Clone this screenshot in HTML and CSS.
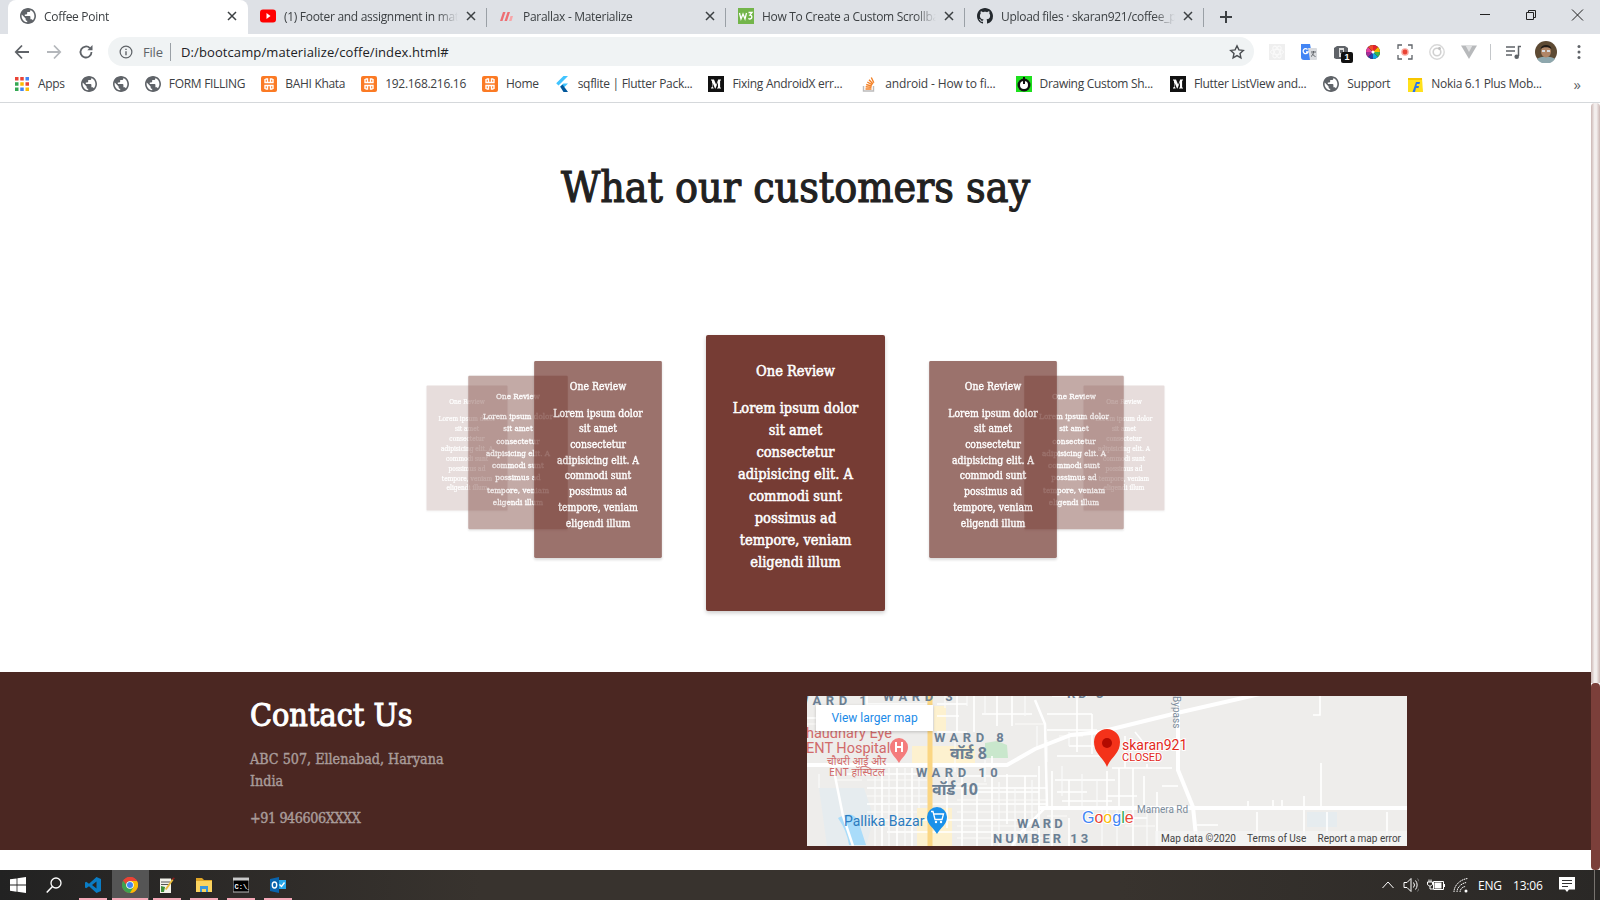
FILE: index.html
```html
<!DOCTYPE html>
<html>
<head>
    <meta charset="UTF-8">
    <meta name="viewport" content="width=device-width, initial-scale=1.0">
    <title>Coffee Point</title>
    <link rel="stylesheet" href="styles.css">
</head>
<body>
    <!-- shared icons -->
    <svg class="defs" width="0" height="0">
        <symbol id="i-globe" viewBox="2 2 20 20"><path fill="#5f6368" d="M12 2C6.48 2 2 6.48 2 12s4.48 10 10 10 10-4.48 10-10S17.52 2 12 2zm-1 17.93c-3.95-.49-7-3.85-7-7.93 0-.62.08-1.21.21-1.79L9 15v1c0 1.1.9 2 2 2v1.93zm6.9-2.54c-.26-.81-1-1.39-1.9-1.39h-1v-3c0-.55-.45-1-1-1H8v-2h2c.55 0 1-.45 1-1V7h2c1.1 0 2-.9 2-2v-.41c2.93 1.19 5 4.06 5 7.41 0 2.08-.8 3.97-2.1 5.39z"/></symbol>
        <symbol id="i-xampp" viewBox="0 0 16 16"><rect width="16" height="16" rx="2" fill="#fb7a24"/><path fill="none" stroke="#fff" stroke-width="1.400" d="M4.500 3h2v3.500h3V3h2M4.500 13h2V9.500h3V13h2M4 3v3.500h2M12 3v3.500h-2M4 13V9.500h2M12 13V9.500h-2"/></symbol>
        <symbol id="i-medium" viewBox="0 0 16 16"><rect width="16" height="16" fill="#111"/><path fill="#fff" d="M3 3.500h3l2.200 5.200 2-5.200H13v.6l-.9.8v6.300l.9.8v.5H9v-.5l1-.8V6L7.500 12.500H7L4.500 6.500v4.300l1.100 1.200v.5H3V12l1-1.200V5.200L3 4z"/></symbol>
        <symbol id="i-close" viewBox="0 0 10 10"><path fill="none" stroke="#3c4043" stroke-width="1.500" d="M1 1l8 8M9 1l-8 8"/></symbol>
    </svg>

    <!-- tab strip -->
    <div class="tabstrip">
        <div class="tab tab-active">
            <svg class="tab-icon"><use href="#i-globe"/></svg>
            <span class="tab-title">Coffee Point</span>
            <svg class="tab-close"><use href="#i-close"/></svg>
        </div>
        <div class="tab">
            <svg class="tab-icon" viewBox="0 0 16 16"><rect y="1.500" width="16" height="13" rx="3" fill="#f00"/><path fill="#fff" d="M6.500 5l4 3-4 3z"/></svg>
            <span class="tab-title">(1) Footer and assignment in materialize</span>
            <svg class="tab-close"><use href="#i-close"/></svg>
        </div>
        <div class="tab">
            <svg class="tab-icon" viewBox="0 0 16 16"><path fill="#ee6e73" d="M1 13L4 4h2.500l-3 9zM5.500 13l3-9H11l-3 9z"/><path fill="#f7a5a8" d="M10 13l1.500-5h2.500l-1.500 5z"/></svg>
            <span class="tab-title">Parallax - Materialize</span>
            <svg class="tab-close"><use href="#i-close"/></svg>
        </div>
        <div class="tab">
            <svg class="tab-icon" viewBox="0 0 16 16"><rect width="16" height="16" fill="#73b54a"/><path fill="none" stroke="#fff" stroke-width="1.300" d="M1.500 5l1.500 6 2-5 2 5 1.500-6M10.500 4.500h3.500l-2 2.500c2.500 0 2.500 4-.5 4l-1.200-.5"/></svg>
            <span class="tab-title">How To Create a Custom Scrollbar</span>
            <svg class="tab-close"><use href="#i-close"/></svg>
        </div>
        <div class="tab">
            <svg class="tab-icon" viewBox="0 0 16 16"><path fill="#24292e" d="M8 0C3.58 0 0 3.58 0 8c0 3.54 2.29 6.53 5.47 7.59.4.07.55-.17.55-.38 0-.19-.01-.82-.01-1.49-2.01.37-2.53-.49-2.69-.94-.09-.23-.48-.94-.82-1.13-.28-.15-.68-.52-.01-.53.63-.01 1.08.58 1.23.82.72 1.21 1.87.87 2.33.66.07-.52.28-.87.51-1.07-1.78-.2-3.64-.89-3.64-3.95 0-.87.31-1.59.82-2.15-.08-.2-.36-1.02.08-2.12 0 0 .67-.21 2.2.82.64-.18 1.32-.27 2-.27.68 0 1.36.09 2 .27 1.53-1.04 2.2-.82 2.2-.82.44 1.1.16 1.92.08 2.12.51.56.82 1.27.82 2.15 0 3.07-1.87 3.75-3.65 3.95.29.25.54.73.54 1.48 0 1.07-.01 1.930-.01 2.2 0 .21.15.46.55.38A8.013 8.013 0 0016 8c0-4.42-3.58-8-8-8z"/></svg>
            <span class="tab-title">Upload files · skaran921/coffee_point</span>
            <svg class="tab-close"><use href="#i-close"/></svg>
        </div>
        <svg class="new-tab" viewBox="0 0 12 12"><path fill="none" stroke="#3c4043" stroke-width="2" d="M6 0v12M0 6h12"/></svg>
        <div class="window-controls">
            <svg viewBox="0 0 46 30"><path fill="none" stroke="#222" d="M18 14.500h10"/></svg>
            <svg viewBox="0 0 46 30"><path fill="none" stroke="#222" d="M18.500 12.500h7v7h-7zM20.500 12.500v-2h7v7h-2"/></svg>
            <svg viewBox="0 0 46 30"><path fill="none" stroke="#222" d="M18 9.500l11 11M29 9.500l-11 11"/></svg>
        </div>
    </div>

    <!-- address bar -->
    <div class="toolbar">
        <svg class="nav-icon" viewBox="0 0 16 16"><path fill="none" stroke="#5f6368" stroke-width="1.800" d="M15 8H2M8 1.500L1.800 8 8 14.500"/></svg>
        <svg class="nav-icon" viewBox="0 0 16 16"><path fill="none" stroke="#b4b7bb" stroke-width="1.800" d="M1 8h13M8 1.500L14.200 8 8 14.500"/></svg>
        <svg class="nav-icon" viewBox="0 0 16 16"><path fill="none" stroke="#5f6368" stroke-width="1.800" d="M13.500 8a5.500 5.500 0 1 1-1.600-3.900"/><path fill="#5f6368" d="M14.500 1v5.200H9.300z"/></svg>
        <div class="omnibox">
            <svg class="info-icon" viewBox="0 0 16 16"><circle cx="8" cy="8" r="6.700" fill="none" stroke="#5f6368" stroke-width="1.400"/><path fill="#5f6368" d="M7.200 7h1.600v4.800H7.200zM7.200 4.200h1.600v1.600H7.200z"/></svg>
            <span class="scheme">File</span>
            <span class="url">D:/bootcamp/materialize/coffe/index.html#</span>
            <svg class="star-icon" viewBox="0 0 16 16"><path fill="none" stroke="#4a4d51" stroke-width="1.400" d="M8 1.800l1.900 4.100 4.400.5-3.300 3 .9 4.400L8 11.600l-3.900 2.200.9-4.400-3.300-3 4.400-.5z"/></svg>
        </div>
        <div class="extensions">
            <svg viewBox="0 0 16 16"><rect width="16" height="16" fill="#efefef"/><g fill="none" stroke="#fafafa" stroke-width="1"><ellipse cx="8" cy="8" rx="6.500" ry="2.600"/><ellipse cx="8" cy="8" rx="6.500" ry="2.600" transform="rotate(60 8 8)"/><ellipse cx="8" cy="8" rx="6.500" ry="2.600" transform="rotate(120 8 8)"/></g></svg>
            <svg viewBox="0 0 16 16"><path fill="#4285f4" d="M0 0h9l3 16H3a3 3 0 0 1-3-3z"/><path fill="#dadce0" d="M7 4h8a1 1 0 0 1 1 1v10a1 1 0 0 1-1 1H9z"/><path fill="none" stroke="#fff" stroke-width="1.300" d="M6.500 5.500a2.500 2.500 0 1 0 .5 2.500H5"/><path fill="none" stroke="#5f6368" d="M10 8h5M12.500 7v1c0 2-1 3.500-2.500 4.500M11 9.500c.7 1.300 1.800 2.400 3.500 3"/></svg>
            <div class="ext-badged">
                <svg viewBox="0 0 16 16"><path fill="#5f6368" d="M1 4l3-2h8l3 2v10l-2 1H3l-2-1z"/><path fill="#ddd" d="M6 4h5v9H6z"/><path fill="#5f6368" d="M7 6h3v3H7z"/></svg>
                <span class="ext-badge">1</span>
            </div>
            <svg viewBox="0 0 16 16"><circle cx="8" cy="8" r="7" fill="#111"/><path fill="#e8212a" d="M8 8V1a7 7 0 0 1 5 2z"/><path fill="#f7b500" d="M8 8l5-5a7 7 0 0 1 2 5z"/><path fill="#3db54a" d="M8 8h7a7 7 0 0 1-2 5z"/><path fill="#11a8e0" d="M8 8l5 5a7 7 0 0 1-5 2z"/><path fill="#2b3fa8" d="M8 8v7a7 7 0 0 1-5-2z"/><path fill="#a32c99" d="M8 8l-5 5a7 7 0 0 1-2-5z"/><path fill="#e73f9d" d="M8 8H1a7 7 0 0 1 2-5z"/><path fill="#ee4b2b" d="M8 8L3 3a7 7 0 0 1 5-2z"/><circle cx="8" cy="8" r="1.500" fill="#fff"/></svg>
            <svg viewBox="0 0 16 16"><path fill="none" stroke="#5f6368" stroke-width="1.300" d="M1 5V1h4M11 1h4v4M15 11v4h-4M5 15H1v-4"/><circle cx="8" cy="8" r="3.800" fill="#f8a9a1"/><circle cx="8" cy="8" r="2.400" fill="#ea4335"/></svg>
            <svg viewBox="0 0 16 16"><circle cx="8" cy="8" r="7.200" fill="none" stroke="#d8d8d8" stroke-width="1.400"/><circle cx="8" cy="8" r="3.800" fill="none" stroke="#d0d0d0" stroke-width="1.600"/><circle cx="10.500" cy="4.500" r="1.400" fill="#bdbdbd"/></svg>
            <svg viewBox="0 0 16 16"><path fill="#b7b9bb" d="M0 1.500h16L8 15z"/><path fill="#e1e2e3" d="M4.500 1.500h7L8 8z"/></svg>
            <span class="tool-divider"></span>
            <svg class="ext-media" viewBox="0 0 16 16"><path fill="none" stroke="#5f6368" stroke-width="1.500" d="M1 3h9M1 7h9M1 11h6M13.500 12V2.500H16"/><circle cx="11.700" cy="12.800" r="2.300" fill="#5f6368"/></svg>
            <svg class="avatar" viewBox="0 0 22 22"><circle cx="11" cy="11" r="11" fill="#5d4a33"/><path fill="#8ea7ad" d="M2 18c3-3.500 15-3.500 18 0a11 11 0 0 1-18 0z"/><ellipse cx="11" cy="10.500" rx="5" ry="6" fill="#b08566"/><path fill="#1f1a16" d="M5.500 8C6 2.500 16 2.500 16.500 8 14 5.500 8 5.500 5.500 8z"/><path fill="#d6dbe0" d="M7 9h3v2H7zM12 9h3v2h-3z"/></svg>
            <svg class="menu-dots" viewBox="0 0 4 16"><circle cx="2" cy="2.500" r="1.500" fill="#5f6368"/><circle cx="2" cy="8" r="1.500" fill="#5f6368"/><circle cx="2" cy="13.500" r="1.500" fill="#5f6368"/></svg>
        </div>
    </div>

    <!-- bookmarks -->
    <div class="bookmarks">
        <div class="bookmark">
            <svg class="bm-icon" viewBox="0 0 16 16"><g fill="#ea4335"><rect x="1" y="1" width="3.500" height="3.500"/><rect x="6.250" y="1" width="3.500" height="3.500"/></g><rect x="11.500" y="1" width="3.500" height="3.500" fill="#4285f4"/><rect x="1" y="6.250" width="3.500" height="3.500" fill="#34a853"/><rect x="6.250" y="6.250" width="3.500" height="3.500" fill="#fbbc05"/><rect x="11.500" y="6.250" width="3.500" height="3.500" fill="#ea4335"/><g fill="#34a853"><rect x="1" y="11.500" width="3.500" height="3.500"/></g><rect x="6.250" y="11.500" width="3.500" height="3.500" fill="#4285f4"/><rect x="11.500" y="11.500" width="3.500" height="3.500" fill="#fbbc05"/></svg>
            <span>Apps</span>
        </div>
        <div class="bookmark"><svg class="bm-icon"><use href="#i-globe"/></svg></div>
        <div class="bookmark"><svg class="bm-icon"><use href="#i-globe"/></svg></div>
        <div class="bookmark"><svg class="bm-icon"><use href="#i-globe"/></svg><span>FORM FILLING</span></div>
        <div class="bookmark"><svg class="bm-icon"><use href="#i-xampp"/></svg><span>BAHI Khata</span></div>
        <div class="bookmark"><svg class="bm-icon"><use href="#i-xampp"/></svg><span>192.168.216.16</span></div>
        <div class="bookmark"><svg class="bm-icon"><use href="#i-xampp"/></svg><span>Home</span></div>
        <div class="bookmark bm-flutter">
            <svg class="bm-icon" viewBox="0 0 16 16"><path fill="#40c4ff" d="M9.500 0H14L4.500 9.500 2.200 7.200zM9.500 7.500H14L8.500 13l-2.300-2.300z"/><path fill="#01579b" d="M6.200 10.700L8.500 8.500 14 16H9.500z"/></svg>
            <span>sqflite | Flutter Pack...</span>
        </div>
        <div class="bookmark"><svg class="bm-icon"><use href="#i-medium"/></svg><span>Fixing AndroidX err...</span></div>
        <div class="bookmark bm-so">
            <svg class="bm-icon" viewBox="0 0 16 16"><path fill="none" stroke="#bcbbbb" stroke-width="1.400" d="M2.500 10v5h10v-5"/><path fill="none" stroke="#f48024" stroke-width="1.400" d="M4.500 13h6M4.700 10.800l5.800.6M5.200 8.500l5.600 1.600M6.300 6l5 2.800M8 3.700l4 4.300M10.300 1.500l2.500 5.300"/></svg>
            <span>android - How to fi...</span>
        </div>
        <div class="bookmark bm-drawing">
            <svg class="bm-icon" viewBox="0 0 16 16"><rect width="16" height="16" fill="#1de01d"/><circle cx="8" cy="9" r="6.500" fill="#111"/><circle cx="8" cy="9" r="4" fill="#fff"/><rect x="7" y="1" width="2" height="7" fill="#111"/></svg>
            <span>Drawing Custom Sh...</span>
        </div>
        <div class="bookmark bm-nudge"><svg class="bm-icon"><use href="#i-medium"/></svg><span>Flutter ListView and...</span></div>
        <div class="bookmark bm-nudge"><svg class="bm-icon"><use href="#i-globe"/></svg><span>Support</span></div>
        <div class="bookmark bm-nudge">
            <svg class="bm-icon" viewBox="0 0 16 16"><path fill="#ffe11b" d="M1 2h14l1 14H1z"/><path fill="#f7c600" d="M1 2h14v2H1z"/><path fill="#2874f0" d="M9 6h4l-.5 2H10l-.5 2h2.500l-.5 2H9l-1 4H5.500z"/></svg>
            <span>Nokia 6.1 Plus Mob...</span>
        </div>
        <span class="bm-more">»</span>
    </div>

    <div class="viewport">
        <div class="page">
            <h1 class="section-title">What our customers say</h1>

            <!-- overlapping carousel, each card sits at its own depth -->
            <div class="carousel">
                <div class="review depth-3 left-3"><h5>One Review</h5><p>Lorem ipsum dolor<br>sit amet<br>consectetur<br>adipisicing elit. A<br>commodi sunt<br>possimus ad<br>tempore, veniam<br>eligendi illum</p></div>
                <div class="review depth-3 right-3"><h5>One Review</h5><p>Lorem ipsum dolor<br>sit amet<br>consectetur<br>adipisicing elit. A<br>commodi sunt<br>possimus ad<br>tempore, veniam<br>eligendi illum</p></div>
                <div class="review depth-2 left-2"><h5>One Review</h5><p>Lorem ipsum dolor<br>sit amet<br>consectetur<br>adipisicing elit. A<br>commodi sunt<br>possimus ad<br>tempore, veniam<br>eligendi illum</p></div>
                <div class="review depth-2 right-2"><h5>One Review</h5><p>Lorem ipsum dolor<br>sit amet<br>consectetur<br>adipisicing elit. A<br>commodi sunt<br>possimus ad<br>tempore, veniam<br>eligendi illum</p></div>
                <div class="review depth-1 left-1"><h5>One Review</h5><p>Lorem ipsum dolor<br>sit amet<br>consectetur<br>adipisicing elit. A<br>commodi sunt<br>possimus ad<br>tempore, veniam<br>eligendi illum</p></div>
                <div class="review depth-1 right-1"><h5>One Review</h5><p>Lorem ipsum dolor<br>sit amet<br>consectetur<br>adipisicing elit. A<br>commodi sunt<br>possimus ad<br>tempore, veniam<br>eligendi illum</p></div>
                <div class="review depth-0"><h5>One Review</h5><p>Lorem ipsum dolor<br>sit amet<br>consectetur<br>adipisicing elit. A<br>commodi sunt<br>possimus ad<br>tempore, veniam<br>eligendi illum</p></div>
            </div>

            <footer class="footer">
                <div class="contact">
                    <h2>Contact Us</h2>
                    <p>ABC 507, Ellenabad, Haryana<br>India</p>
                    <p class="contact-phone">+91 946606XXXX</p>
                </div>
                <div class="map">
                    <svg class="map-canvas" viewBox="0 0 600 150" width="600" height="150">
                        <rect width="600" height="150" fill="#eeedeb"/>
                        <!-- land use -->
                        <path fill="#e6ecef" d="M12 92h45l10 30-8 28H20zM500 116h30v15h-30z"/>
                        <path fill="#a9dcfa" d="M31 122q14-8 20 2l8 25H42q-2-14-11-27z"/>
                        <path fill="#c9e7cc" d="M178 47l12-2 10 4 1 13h-23z"/>
                        <path fill="#fdf1cf" d="M105 50h63v21h-63zM110 112h35v38h-35zM127 10h12v25h-12z"/>
                        <!-- small streets -->
                        <path class="road" d="M0 22h30M60 8h60M130 8h30M130 20h22M130 36h30M175 18h50M60 30v-30M150 0v36M167 0v36M190 0v30M205 0v30M245 0h35M240 18h45M240 34h50M270 0v34M285 18v40"/>
                        <path class="road" d="M60 92h180M60 108h180M60 124h170M80 136h150M40 78h70M150 80h80M168 96h64M185 60v90M200 78v50M218 80v60M232 70v80M75 72v78M90 72v78M105 72v78M140 72v60M155 80v70M170 96v54M245 75v75M262 84v30M262 122v28M248 84h60M250 96h30"/>
                        <path class="road" d="M300 75v50M312 72v40M326 72v78M337 80v30M350 96v54M305 72h60M300 100h30M310 122h30M262 50h40M270 34v22M250 60h45M255 105h50M318 40v32M328 36l8 10M340 68v4M355 90h16"/>
                        <path class="road" d="M390 129h21M441 105v7M466 104v8M475 104v8M497 100v49M514 67v45M513 0v19h-7M580 116v34M450 116v34M520 116v34"/>
                        <path class="road-thin" d="M68 72v78M82 72v78M98 72v78M112 72v40M148 36v40M178 64v22M192 86v64M208 92v58M225 84v66M240 120h20M60 84h60M60 100h60M60 116h50M60 130h50M150 88h30M150 104h90M150 116h80M150 130h80M150 142h90M138 0v12M160 0v10M178 0v18M218 0v20M230 30v24M208 28h30M0 28h12M12 78v14M30 84h25M255 70v30M275 78v32M290 84v28M280 122h26M295 112v38M310 112v38M340 116v34M318 130h30M240 44v22M252 40h24M262 36v14"/>
                        <!-- main roads -->
                        <path class="road-main" d="M0 69h120M120 69h80l28-16 36-14 29-3 77-19 83-19"/>
                        <path class="road-main" d="M371 0v74l15 37 4 39"/>
                        <path class="road-main" d="M231 112h369"/>
                        <path class="road-mid" d="M228 4l10 24 2 82-25 25-10 15"/>
                        <path class="road-mid" d="M26 70l10 50 10 30"/>
                        <path class="road-yellow" d="M123 0v150"/>

                        <!-- place labels -->
                        <g class="map-ward">
                            <text x="-10" y="9" class="ward-wide">WARD 1</text>
                            <text x="76" y="5" class="ward-wide">WARD 3</text>
                            <text x="127" y="46" class="ward-wide">WARD 8</text>
                            <text x="109" y="81" class="ward-wide">WARD 10</text>
                            <text x="210" y="132">WARD</text>
                            <text x="186" y="147">NUMBER 13</text>
                            <text x="260" y="2">RD 3</text>
                        </g>
                        <g class="map-ward-hi">
                            <text x="143" y="63">वॉर्ड 8</text>
                            <text x="125" y="99">वॉर्ड 10</text>
                        </g>
                        <g class="map-hospital">
                            <text x="-1" y="42">haudhary Eye</text>
                            <text x="-1" y="57">ENT Hospital</text>
                            <text x="20" y="69" class="map-small">चौधरी आई और</text>
                            <text x="22" y="80" class="map-small">ENT हॉस्पिटल</text>
                        </g>
                        <path fill="#f47c7c" d="M92 67c-3-6-9-9-9-16a9 9 0 0 1 18 0c0 7-6 10-9 16z"/>
                        <path fill="#fff" d="M88 46h2v4h4v-4h2v10h-2v-4h-4v4h-2z"/>
                        <text x="37" y="130" class="map-shop">Pallika Bazar</text>
                        <path fill="#1a91ea" d="M130 138c-3-6-10-9-10-17a10 10 0 0 1 20 0c0 8-7 11-10 17z"/>
                        <path fill="none" stroke="#fff" stroke-width="1.300" d="M124 115.500h2l2 8h7l1.500-5.500h-9.500"/>
                        <circle cx="129" cy="126" r="1.200" fill="#fff"/><circle cx="134" cy="126" r="1.200" fill="#fff"/>

                        <!-- the marker -->
                        <path fill="#f4321a" d="M300 71c-3-9-13-13-13-25a13 13 0 0 1 26 0c0 12-10 16-13 25z"/>
                        <circle cx="300" cy="47" r="5" fill="#b30a00"/>
                        <text x="315" y="54" class="map-place">skaran921</text>
                        <text x="315" y="65" class="map-closed">CLOSED</text>

                        <text x="0" y="0" class="map-road-label" transform="translate(366 0) rotate(90)">Bypass</text>
                        <text x="330" y="117" class="map-road-label">Mamera Rd</text>
                        <text x="275" y="127" class="map-google"><tspan fill="#4285f4">G</tspan><tspan fill="#ea4335">o</tspan><tspan fill="#fbbc05">o</tspan><tspan fill="#4285f4">g</tspan><tspan fill="#34a853">l</tspan><tspan fill="#ea4335">e</tspan></text>
                    </svg>
                    <a class="map-link">View larger map</a>
                    <div class="map-credits">
                        <span>Map data ©2020</span>
                        <span>Terms of Use</span>
                        <span>Report a map error</span>
                    </div>
                </div>
            </footer>
        </div>
        <div class="scrollbar"><div class="scroll-track"></div><div class="scroll-thumb"></div></div>
    </div>

    <!-- windows taskbar -->
    <div class="taskbar">
        <div class="task-start">
            <svg viewBox="0 0 16 16"><path fill="#fff" d="M0 2.300l6.600-.9v6.200H0zM7.400 1.300L16 0v7.600H7.400zM0 8.400h6.600v6.300L0 13.800zM7.400 8.400H16V16l-8.600-1.200z"/></svg>
        </div>
        <div class="task-start">
            <svg viewBox="0 0 16 16"><circle cx="10" cy="6" r="5" fill="none" stroke="#fff" stroke-width="1.300"/><path stroke="#fff" stroke-width="1.500" d="M6.500 9.500L.7 15.500"/></svg>
        </div>
        <div class="task-app">
            <svg viewBox="0 0 16 16"><path fill="#0a7cc4" d="M11.500 0L16 2v12l-4.500 2L4 9.200 1.200 11.300 0 10.600V5.400l1.200-.7L4 6.800zM11.500 4.500L7 8l4.500 3.500z"/></svg>
        </div>
        <div class="task-app task-active">
            <svg viewBox="0 0 16 16"><circle cx="8" cy="8" r="8" fill="#ea4335"/><path fill="#fbbc05" d="M8 16a8 8 0 0 0 7-12H8z"/><path fill="#34a853" d="M8 16l3.500-6L8 4 1 4a8 8 0 0 0 7 12z" opacity=".95"/><path fill="#ea4335" d="M1.200 3.800A8 8 0 0 1 15 4H8a4 4 0 0 0-4 3.500z"/><circle cx="8" cy="8" r="3.800" fill="#fff"/><circle cx="8" cy="8" r="3" fill="#4285f4"/></svg>
        </div>
        <div class="task-app">
            <svg viewBox="0 0 16 16"><path fill="#f2f2ea" d="M1 1.500h11V16H1z"/><path stroke="#555" d="M2 5h9M2 7.500h9"/><path fill="#3f8f3a" d="M2 9l4 1-1 5H2z"/><path fill="#e7b93a" d="M6 12l7-10 1.500 1L7.500 13z"/><path fill="#8a1c1c" d="M13 2l1-1.500L16 1l-1.500 2z"/></svg>
        </div>
        <div class="task-app">
            <svg viewBox="0 0 16 16"><path fill="#e0a526" d="M0 1h6l2 2h8v3H0z"/><path fill="#fbd35f" d="M0 4h16v11H0z"/><path fill="#3a96dd" d="M4 9h8v6h-2v-3H6v3H4z"/></svg>
        </div>
        <div class="task-app">
            <svg viewBox="0 0 16 16"><rect y="1" width="16" height="14" fill="#000" stroke="#b9b9b9"/><rect y="1" width="16" height="2.500" fill="#c9c9c9"/><text class="cmd-text" x="1.500" y="11.500">C:\_</text></svg>
        </div>
        <div class="task-app">
            <svg viewBox="0 0 16 16"><path fill="#28a8ea" d="M7 3h9v9H7z"/><path fill="none" stroke="#fff" stroke-width="1.300" d="M9.500 7.500l2 2 3-4"/><path fill="#0a64ad" d="M0 2l9-2v16l-9-2z"/><ellipse cx="4.500" cy="8" rx="2.200" ry="3" fill="none" stroke="#fff" stroke-width="1.400"/></svg>
        </div>
        <div class="tray">
            <svg class="tray-chevron" viewBox="0 0 12 8"><path fill="none" stroke="#fff" d="M.5 7L6 1l5.500 6"/></svg>
            <svg class="tray-sound" viewBox="0 0 16 16"><path fill="none" stroke="#fff" d="M1 5.500h3l4-4v13l-4-4H1zM10.500 5.500a4 4 0 0 1 0 5M12.500 3.500a7 7 0 0 1 0 9"/><path fill="none" stroke="#777" d="M14.500 1.500a10 10 0 0 1 0 13"/></svg>
            <svg class="tray-battery" viewBox="0 0 18 12"><path fill="none" stroke="#fff" d="M6.500 2.500h10v8h-10zM2 .5v2.500M4 .5v2.500M.5 3h5v2c0 1.500-1.500 2-2.500 2s-2.500-.5-2.500-2zM3 7v3h3"/><path fill="#fff" d="M7.500 3.500h7v6h-7zM17 5h1v3h-1z"/></svg>
            <svg class="tray-wifi" viewBox="0 0 16 16"><path fill="none" stroke="#fff" d="M1 15C1 8 8 2 15 1.500M4 15c0-5 5-9 9.500-9.500M7 15c0-3 3-5.500 5.500-5.500" stroke-dasharray="1.500 .6"/><circle cx="13" cy="14" r="1.500" fill="#fff"/></svg>
            <span class="tray-lang">ENG</span>
            <span class="tray-clock">13:06</span>
            <svg class="tray-note" viewBox="0 0 16 16"><path fill="#fff" d="M0 0h16v12.500h-6L8 15l-2-2.500H0z"/><path stroke="#333" d="M3 3.500h10M3 6.500h10M3 9.500h6"/></svg>
            <span class="tray-desktop"></span>
        </div>
    </div>
</body>
</html>
```

FILE: styles.css
```css
* {
    box-sizing: border-box;
}

body {
    margin: 0;
    height: 100vh;
    overflow: hidden;
    display: flex;
    flex-direction: column;
    background: #fff;
    font-family: 'Open Sans', 'Noto Sans', sans-serif;
    font-size: 12px;
    color: #3c4043;
}

.defs {
    position: absolute;
}

/* tab strip */
.tabstrip {
    flex: none;
    height: 34px;
    display: flex;
    align-items: flex-end;
    padding-left: 8px;
    background: #dee1e6;
}

.tab {
    position: relative;
    width: 239px;
    height: 34px;
    display: flex;
    align-items: center;
    padding: 0 11px 2px 12px;
}

/* short divider between the inactive tabs */
.tab::after {
    content: "";
    position: absolute;
    right: 0;
    top: 8px;
    width: 1px;
    height: 19px;
    background: #9aa0a6;
}

.tab-active {
    width: 240px;
    background: #fff;
    border-radius: 8px 8px 0 0;
}

.tab-active::after {
    display: none;
}

.tab-icon {
    flex: none;
    width: 16px;
    height: 16px;
    margin-right: 8px;
}

.tab-title {
    flex: 1;
    overflow: hidden;
    white-space: nowrap;
    letter-spacing: -.3px;
    -webkit-mask-image: linear-gradient(to right, #000 88%, transparent);
    mask-image: linear-gradient(to right, #000 88%, transparent);
}

.tab-close {
    flex: none;
    width: 10px;
    height: 10px;
    margin-left: 8px;
}

.new-tab {
    width: 12px;
    height: 12px;
    margin: 0 0 11px 16px;
}

.window-controls {
    margin-left: auto;
    align-self: flex-start;
    display: flex;
}

.window-controls svg {
    width: 46px;
    height: 30px;
}

/* address bar */
.toolbar {
    flex: none;
    height: 34px;
    display: flex;
    align-items: center;
    padding: 1px 0 0 14px;
    background: #fff;
}

.nav-icon {
    width: 16px;
    height: 16px;
    margin-right: 16px;
}

.omnibox {
    width: 1146px;
    height: 29px;
    margin-left: -2px;
    display: flex;
    align-items: center;
    padding: 0 9px 0 11px;
    border-radius: 15px;
    background: #f0f3f4;
    font-size: 13px;
}

.info-icon {
    width: 14px;
    height: 14px;
    margin-right: 10px;
}

.scheme {
    width: 27px;
    color: #5f6368;
    letter-spacing: -.2px;
}

.url {
    flex: 1;
    padding-left: 10px;
    border-left: 1px solid #9aa0a6;
    letter-spacing: .1px;
    color: #202124;
}

.star-icon {
    width: 16px;
    height: 16px;
}

.extensions {
    display: flex;
    align-items: center;
    padding-left: 15px;
    gap: 16px;
}

.extensions svg {
    width: 16px;
    height: 16px;
    flex: none;
}

.ext-badged {
    position: relative;
    width: 16px;
    height: 16px;
}

.ext-badge {
    position: absolute;
    left: 8px;
    top: 8px;
    width: 12px;
    height: 11px;
    border-radius: 2px;
    background: #111;
    color: #fff;
    font: bold 9px/11px 'Liberation Sans', sans-serif;
    text-align: center;
}

.tool-divider {
    width: 1px;
    height: 16px;
    margin: 0 -2px 0 -3px;
    background: #c4c7ca;
}

.extensions .avatar {
    width: 22px;
    height: 22px;
    margin: 0 -3px 0 -2px;
}

.extensions .menu-dots {
    width: 4px;
    margin-left: 7px;
}

/* bookmarks */
.bookmarks {
    flex: none;
    height: 35px;
    display: flex;
    align-items: center;
    gap: 16px;
    padding: 0 0 3px 14px;
    border-bottom: 1px solid #d5d8db;
    background: #fff;
}

.bookmark {
    display: flex;
    align-items: center;
    gap: 8px;
    white-space: nowrap;
    letter-spacing: -.3px;
}

.bm-flutter {
    margin-left: -1px;
}

.bm-so {
    margin-left: 3px;
    letter-spacing: -.15px;
}

.bm-drawing {
    margin-left: 4px;
}

.bm-nudge {
    margin-left: 1px;
}

.bm-icon {
    width: 16px;
    height: 16px;
    flex: none;
}

.bm-more {
    margin-left: 16px;
    font-size: 15px;
    color: #5f6368;
}

/* page */
.viewport {
    flex: 1;
    min-height: 0;
    display: flex;
}

.page {
    flex: 1;
    min-width: 0;
    display: flex;
    flex-direction: column;
    font-family: 'DejaVu Serif Condensed', 'DejaVu Serif', serif;
}

.section-title {
    flex: none;
    height: 197px;
    margin: 0;
    padding-top: 54px;
    text-align: center;
    font-size: 42.500px;
    line-height: 62px;
    font-weight: normal;
    color: #212121;
    -webkit-text-stroke: 1.100px #212121;
}

.carousel {
    position: relative;
    height: 372px;
}

.review {
    position: absolute;
    top: 35px;
    left: 706px;
    width: 179px;
    height: 276px;
    padding-top: 25px;
    border-radius: 2px;
    background: #763c34;
    color: #fff;
    text-align: center;
    box-shadow: 0 2px 4px rgba(0, 0, 0, .2);
    white-space: nowrap;
    -webkit-text-stroke: .5px #fff;
}

.review h5 {
    margin: 0;
    font-size: 14.500px;
    line-height: 22px;
    font-weight: normal;
}

.review p {
    margin: 15px 0 0;
    font-size: 14.500px;
    line-height: 22px;
    font-weight: normal;
}

.depth-1 {
    opacity: .72;
}

.left-1 {
    transform: translate(-197.500px, -13.500px) scale(.7135);
}

.right-1 {
    transform: translate(197.500px, -13.500px) scale(.7135);
}

.depth-2 {
    opacity: .43;
}

.left-2 {
    transform: translate(-277.500px, -20.500px) scale(.556);
}

.right-2 {
    transform: translate(278.500px, -20.500px) scale(.556);
}

.depth-3 {
    opacity: .17;
}

.left-3 {
    transform: translate(-328.500px, -25px) scale(.452);
}

.right-3 {
    transform: translate(328.500px, -25px) scale(.452);
}

/* footer */
.footer {
    flex: none;
    height: 178px;
    display: flex;
    padding: 24px 0 0 250px;
    background: #4b2722;
}

.contact {
    width: 557px;
    color: #a99c9a;
    font-size: 14.200px;
    line-height: 22px;
}

.contact h2 {
    margin: 0 0 14px;
    color: #fff;
    font-size: 32px;
    line-height: 38px;
    font-weight: normal;
    -webkit-text-stroke: 1px #fff;
}

.contact p {
    margin: 0 0 15px;
    -webkit-text-stroke: .4px #a99c9a;
}

.contact .contact-phone {
    letter-spacing: -.4px;
}

.map {
    position: relative;
    width: 600px;
    height: 150px;
    overflow: hidden;
    font-family: Roboto, sans-serif;
}

.map-canvas {
    display: block;
}

.road {
    fill: none;
    stroke: #fff;
    stroke-width: 1.600;
}

.road-thin {
    fill: none;
    stroke: #fbfbfa;
    stroke-width: 1.200;
}

.road-main {
    fill: none;
    stroke: #fff;
    stroke-width: 4;
}

.road-mid {
    fill: none;
    stroke: #fff;
    stroke-width: 2.500;
}

.road-yellow {
    fill: none;
    stroke: #fbd683;
    stroke-width: 5;
}

.map-ward {
    fill: #6b7f93;
    font-size: 13px;
    font-weight: bold;
    letter-spacing: 3px;
}

.map-ward .ward-wide {
    letter-spacing: 4.500px;
}

.map-ward-hi {
    fill: #6b7f93;
    font-family: 'Noto Sans', 'DejaVu Sans', sans-serif;
    font-size: 16px;
    font-weight: bold;
}

.map-hospital {
    fill: #d16a6a;
    font-size: 14.500px;
}

.map-hospital .map-small {
    font-family: 'Noto Sans', 'DejaVu Sans', sans-serif;
    font-size: 10.500px;
}

.map-shop {
    fill: #2b7bc0;
    font-size: 14px;
}

.map-place,
.map-closed {
    fill: #e2291c;
    stroke: #fff;
    stroke-width: 2px;
    paint-order: stroke;
}

.map-place {
    font-size: 14px;
}

.map-closed {
    font-size: 11px;
}

.map-road-label {
    fill: #7b8c9c;
    font-size: 10px;
}

.map-google {
    font-family: 'Liberation Sans', sans-serif;
    font-size: 16px;
    stroke: #fff;
    stroke-width: 2px;
    paint-order: stroke;
}

.map-link {
    position: absolute;
    left: 9px;
    top: 9px;
    width: 117px;
    height: 26px;
    background: #fff;
    color: #1a8ae8;
    font-size: 12px;
    line-height: 26px;
    text-align: center;
    box-shadow: 0 1px 3px rgba(0, 0, 0, .2);
}

.map-credits {
    position: absolute;
    right: 0;
    bottom: 0;
    width: 252px;
    height: 15px;
    display: flex;
    padding: 0 6px;
    justify-content: space-between;
    background: rgba(245, 245, 245, .7);
    color: #444;
    font-size: 10px;
    line-height: 15px;
}

/* custom scrollbar of the page */
.scrollbar {
    flex: none;
    width: 9px;
    display: flex;
    flex-direction: column;
}

.scroll-track {
    height: 580px;
    border-radius: 4px 4px 0 0;
    background: linear-gradient(to right, #cbb6b3, #f3eeed 40%, #f3eeed 60%, #cbb6b3);
}

.scroll-thumb {
    height: 187px;
    border-radius: 4px;
    background: #7b3f3a;
}

/* taskbar */
.taskbar {
    flex: none;
    height: 30px;
    display: flex;
    align-items: stretch;
    background: linear-gradient(to right, #222, #38332e 30%, #38332e 70%, #2a2826);
    color: #fff;
}

.task-start {
    width: 36px;
    display: flex;
    align-items: center;
    justify-content: center;
}

.task-start svg {
    width: 16px;
    height: 16px;
}

.task-app {
    position: relative;
    width: 37px;
    display: flex;
    align-items: center;
    justify-content: center;
}

.task-start + .task-app {
    margin-left: 3px;
}

.task-app svg {
    width: 16px;
    height: 16px;
    margin-left: -2px;
}

.task-app::after {
    content: "";
    position: absolute;
    left: 4px;
    right: 5px;
    bottom: 0;
    height: 2px;
    background: #f5a9b8;
}

.task-active {
    background: #555;
}

.task-active::after {
    left: 0;
    right: 1px;
}

.cmd-text {
    fill: #fff;
    font: bold 7px 'Liberation Mono', monospace;
}

.tray {
    margin-left: auto;
    display: flex;
    align-items: center;
    font-size: 12px;
}

.tray-chevron {
    width: 12px;
    height: 8px;
    margin-right: 9px;
}

.tray-sound {
    width: 16px;
    height: 16px;
    margin-right: 8px;
}

.tray-battery {
    width: 18px;
    height: 12px;
    margin-right: 8px;
}

.tray-wifi {
    width: 16px;
    height: 16px;
    margin-right: 9px;
}

.tray-lang {
    width: 35px;
    letter-spacing: -.2px;
}

.tray-clock {
    width: 46px;
    letter-spacing: -.2px;
}

.tray-note {
    width: 16px;
    height: 16px;
    margin-right: 19px;
}

.tray-desktop {
    width: 1px;
    height: 30px;
    margin-right: 5px;
    background: #77736f;
}
```
